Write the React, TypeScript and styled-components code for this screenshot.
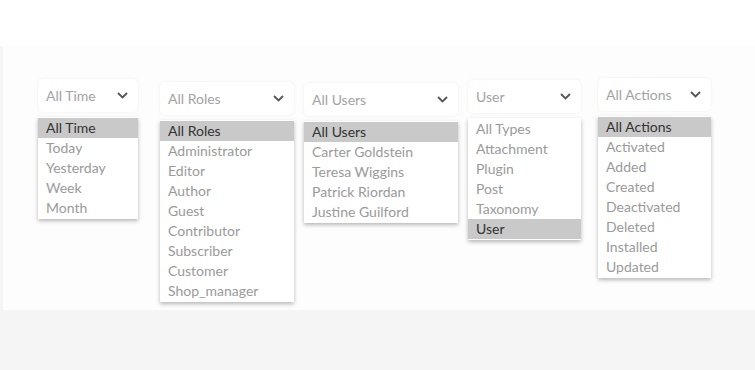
import React from "react";
import styled, { createGlobalStyle } from "styled-components";

const GlobalStyle = createGlobalStyle`
  html, body {
    margin: 0;
    padding: 0;
    background: #f5f5f5;
    font-family: Lato, "Noto Sans", sans-serif;
  }
`;

const Page = styled.div`
  width: 755px;
  height: 370px;
  background: #f5f5f5;
  overflow: hidden;
`;

const TopBand = styled.div`
  height: 46px;
  background: #ffffff;
`;

const Panel = styled.div`
  margin-left: 3px;
  height: 264px;
  background: #fdfdfd;
  display: flex;
  align-items: flex-start;
  padding-left: 35px;
`;

const Column = styled.div<{ $top: number; $width: number; $gap: number }>`
  margin-top: ${(p) => p.$top}px;
  margin-right: ${(p) => p.$gap}px;
  width: ${(p) => p.$width}px;
  display: flex;
  flex-direction: column;
  gap: 5px;
`;

const SelectBox = styled.div`
  height: 33px;
  background: #ffffff;
  border-radius: 5px;
  box-shadow: 0 0 3px rgba(0, 0, 0, 0.07);
  display: flex;
  align-items: center;
  justify-content: space-between;
  padding: 0 10px 0 8px;
  color: #a3a3a3;
  font-size: 14px;
`;

const Chevron = styled.svg`
  width: 11px;
  height: 7px;
`;

const List = styled.ul`
  list-style: none;
  margin: 0;
  padding: 1px 0;
  background: #ffffff;
  box-shadow: 0 2px 4px rgba(0, 0, 0, 0.28);
`;

const Item = styled.li<{ $active?: boolean }>`
  height: 20px;
  line-height: 20px;
  padding-left: 8px;
  font-size: 14px;
  color: ${(p) => (p.$active ? "#333333" : "#9a9a9a")};
  background: ${(p) => (p.$active ? "#c9c9c9" : "transparent")};
  white-space: nowrap;
`;

type Dropdown = {
  value: string;
  options: string[];
  top: number;
  width: number;
  gap: number;
};

const dropdowns: Dropdown[] = [
  { value: "All Time", options: ["All Time", "Today", "Yesterday", "Week", "Month"], top: 33, width: 100, gap: 22 },
  {
    value: "All Roles",
    options: ["All Roles", "Administrator", "Editor", "Author", "Guest", "Contributor", "Subscriber", "Customer", "Shop_manager"],
    top: 36,
    width: 134,
    gap: 10,
  },
  {
    value: "All Users",
    options: ["All Users", "Carter Goldstein", "Teresa Wiggins", "Patrick Riordan", "Justine Guilford"],
    top: 37,
    width: 154,
    gap: 10,
  },
  { value: "User", options: ["All Types", "Attachment", "Plugin", "Post", "Taxonomy", "User"], top: 34, width: 113, gap: 17 },
  {
    value: "All Actions",
    options: ["All Actions", "Activated", "Added", "Created", "Deactivated", "Deleted", "Installed", "Updated"],
    top: 32,
    width: 113,
    gap: 0,
  },
];

const App = () => {
  return (
    <Page>
      <GlobalStyle />
      <TopBand />
      <Panel>
        {dropdowns.map((d) => (
          <Column key={d.value} $top={d.top} $width={d.width} $gap={d.gap}>
            <SelectBox>
              <span>{d.value}</span>
              <Chevron viewBox="0 0 11 7">
                <path d="M1 1l4.5 4.5L10 1" fill="none" stroke="#555" strokeWidth="1.8" />
              </Chevron>
            </SelectBox>
            <List>
              {d.options.map((o) => (
                <Item key={o} $active={o === d.value}>
                  {o}
                </Item>
              ))}
            </List>
          </Column>
        ))}
      </Panel>
    </Page>
  );
};

export default App;
